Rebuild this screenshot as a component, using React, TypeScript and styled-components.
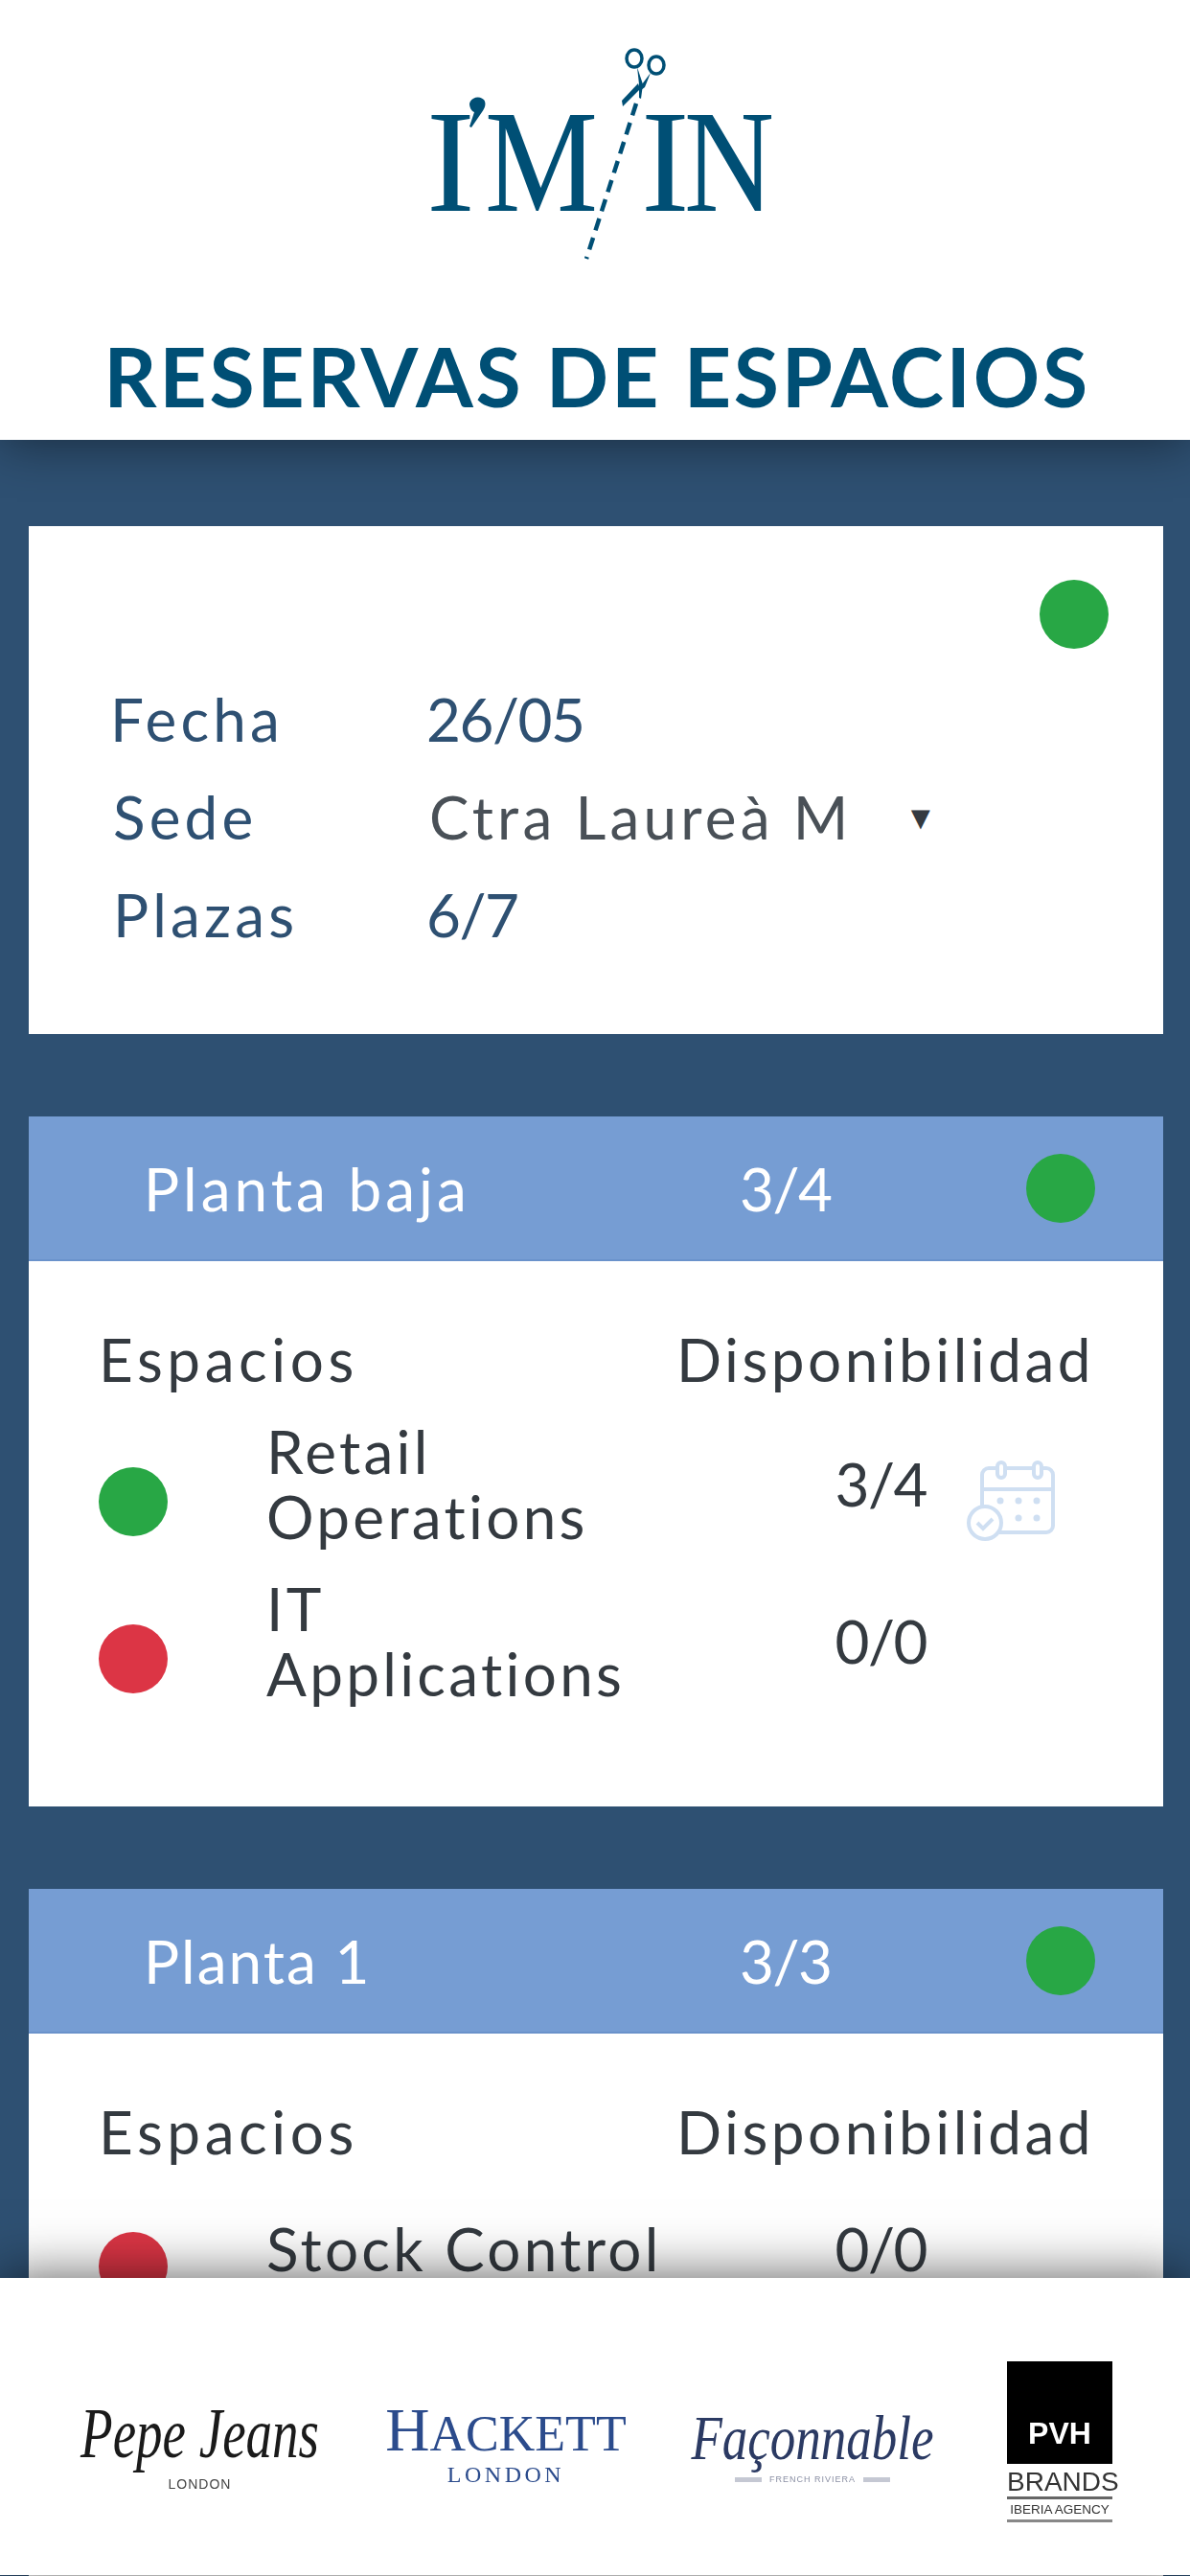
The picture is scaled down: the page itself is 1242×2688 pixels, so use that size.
import styled, { createGlobalStyle } from 'styled-components';

const GlobalStyle = createGlobalStyle`
  html, body {
    margin: 0;
    padding: 0;
    background: #2e5072;
  }
  * {
    box-sizing: border-box;
  }
`;

const Page = styled.div`
  position: relative;
  width: 1242px;
  height: 2688px;
  overflow: hidden;
  background: #2e5072;
  font-family: Lato, 'Open Sans', sans-serif;
`;

const TopBar = styled.header`
  position: relative;
  z-index: 2;
  height: 459px;
  display: flex;
  flex-direction: column;
  align-items: center;
  background: #fff;
  box-shadow: 0 4px 50px rgba(0, 0, 0, 0.45);
`;

const LogoSvg = styled.svg`
  display: block;
  margin-top: 30px;
  flex: none;
`;

const Title = styled.h1`
  margin: 62px 0 0 4px;
  font-size: 86px;
  line-height: 100px;
  font-weight: 700;
  letter-spacing: 2.7px;
  color: #004f75;
  white-space: nowrap;
`;

const Content = styled.main`
  display: flex;
  flex-direction: column;
  gap: 86px;
  padding: 90px 28px 0 30px;
`;

const Card = styled.section`
  background: #fff;
`;

const SummaryCard = styled(Card)`
  height: 530px;
  padding: 56px 57px 0 85px;
  display: flex;
  flex-direction: column;
`;

const SummaryDot = styled.div`
  align-self: flex-end;
  margin-bottom: 22px;
`;

const SummaryRow = styled.div`
  display: grid;
  grid-template-columns: 330px 1fr;
  align-items: center;
  height: 102px;
  font-size: 62px;
  letter-spacing: 4.2px;
  color: #2e5072;
`;

const SummaryLabel = styled.span<{ $inset?: boolean }>`
  padding-left: ${(p) => (p.$inset ? 3 : 0)}px;
`;

const Num = styled.span`
  letter-spacing: -1.5px;
`;

const SelectBox = styled.div`
  display: flex;
  align-items: center;
  padding-left: 3px;
  color: #495057;
`;

const SelectText = styled.span`
  width: 438px;
  white-space: nowrap;
`;

const SelectArrow = styled.span`
  margin-left: 58px;
  font-size: 34px;
  letter-spacing: 0;
  color: #343a40;
`;

const Dot = styled.span<{ $color: 'green' | 'red' }>`
  display: block;
  width: 72px;
  height: 72px;
  border-radius: 50%;
  background: ${(p) => (p.$color === 'green' ? '#28a745' : '#dc3545')};
`;

const FloorHeader = styled.div`
  display: grid;
  grid-template-columns: 622px 299px 72px;
  align-items: center;
  height: 151px;
  padding-left: 120px;
  background: #769dd3;
  border-bottom: 2px solid #6a92cb;
  font-size: 62px;
  color: #fff;
`;

const FloorName = styled.span<{ $spacing: number }>`
  letter-spacing: ${(p) => p.$spacing}px;
`;

const FloorBody = styled.div<{ $gap: number; $pad: number }>`
  display: flex;
  flex-direction: column;
  gap: ${(p) => p.$gap}px;
  padding: 68px 0 ${(p) => p.$pad}px 73px;
`;

const SpacesHead = styled.div`
  display: flex;
  justify-content: space-between;
  height: 68px;
  line-height: 68px;
  padding-right: 72px;
  font-size: 62px;
  letter-spacing: 4.6px;
  color: #343a40;
`;

const AvailabilityLabel = styled.span`
  letter-spacing: 3.5px;
`;

const SpaceRow = styled.div<{ $offset?: number }>`
  display: grid;
  grid-template-columns: 175px 440px 249px 135px;
  align-items: center;
  margin-top: ${(p) => p.$offset ?? 0}px;
  font-size: 62px;
  line-height: 68px;
  letter-spacing: 3.3px;
  color: #343a40;
`;

const RowDot = styled.div`
  margin-top: 38px;
`;

const SpaceName = styled.div`
  white-space: pre-line;
`;

const SpaceCount = styled.div`
  text-align: right;
  letter-spacing: -1.5px;
`;

const CalendarSvg = styled.svg`
  display: block;
  margin: 38px 0 0 42px;
`;

const BottomBar = styled.footer`
  position: absolute;
  z-index: 3;
  left: 0;
  right: 0;
  top: 2377px;
  height: 310px;
  display: flex;
  align-items: center;
  padding: 40px 0 0 86px;
  background: #fff;
  box-shadow: 0 0 55px rgba(0, 0, 0, 0.65);
`;

const BrandLogo = styled.div`
  display: flex;
  flex-direction: column;
  align-items: center;
  font-family: 'Liberation Serif', serif;
  filter: blur(0.6px);
`;

const PepeLogo = styled(BrandLogo)`
  width: 245px;
  color: #1a1a1a;
`;

const PepeName = styled.span`
  font-size: 55px;
  line-height: 74px;
  font-style: italic;
  white-space: nowrap;
  transform: scaleY(1.35);
`;

const TinyCaps = styled.span`
  margin-top: 6px;
  font-family: 'Liberation Sans', sans-serif;
  font-size: 14px;
  line-height: 18px;
  letter-spacing: 1px;
  color: #444;
`;

const HackettLogo = styled(BrandLogo)`
  width: 252px;
  margin-left: 71px;
  color: #2b4b8c;
`;

const HackettName = styled.span`
  font-size: 52px;
  line-height: 50px;
  white-space: nowrap;

  &::first-letter {
    font-size: 64px;
  }
`;

const HackettCity = styled.span`
  margin-top: 6px;
  font-size: 24px;
  line-height: 22px;
  letter-spacing: 3.5px;
`;

const FaconLogo = styled(BrandLogo)`
  width: 246px;
  margin-left: 71px;
  color: #2b3a63;
`;

const FaconName = styled.span`
  font-size: 53px;
  line-height: 62px;
  font-style: italic;
  white-space: nowrap;
  transform: scaleY(1.25);
`;

const FaconTag = styled.div`
  display: flex;
  align-items: center;
  gap: 8px;
  margin-top: 8px;
  font-family: 'Liberation Sans', sans-serif;
  font-size: 9px;
  line-height: 10px;
  letter-spacing: 1px;
  color: #8a8fa3;
  white-space: nowrap;

  &::before,
  &::after {
    content: '';
    width: 28px;
    height: 5px;
    background: #c5c8d3;
  }
`;

const PvhLogo = styled(BrandLogo)`
  width: 110px;
  margin: -8px 0 0 80px;
  align-items: stretch;
  font-family: 'Liberation Sans', sans-serif;
`;

const PvhBox = styled.div`
  height: 107px;
  display: flex;
  align-items: center;
  justify-content: center;
  padding-top: 43px;
  background: #000;
  color: #fff;
  font-size: 32px;
  font-weight: 700;
`;

const PvhBrands = styled.div`
  margin-top: 4px;
  text-align: center;
  font-size: 28px;
  line-height: 30px;
  color: #333;
  border-bottom: 3px solid #666;
`;

const PvhAgency = styled.div`
  padding: 3px 0 2px;
  text-align: center;
  font-size: 13.5px;
  line-height: 16px;
  color: #333;
  white-space: nowrap;
  border-bottom: 3px solid #888;
`;

const Logo = () => (
  <LogoSvg width="400" height="250" viewBox="420 30 400 250">
    <g fill="#004f75" fontFamily="'Liberation Serif', serif" fontSize="152">
      <text x="444" y="220">I</text>
      <text x="505" y="220" textLength="118" lengthAdjust="spacingAndGlyphs">M</text>
      <text x="668" y="220">I</text>
      <text x="713" y="220" textLength="94" lengthAdjust="spacingAndGlyphs">N</text>
    </g>
    <path d="M489 108a9 9 0 0 1 15-4c3 4 1 9-2 13l-11 16-2-1 5-15c-3-1-5-5-5-9z" fill="#004f75" />
    <line x1="663" y1="108" x2="611" y2="270" stroke="#004f75" strokeWidth="4.5" strokeDasharray="13 8" />
    <ellipse cx="661" cy="61" rx="8" ry="9" fill="none" stroke="#004f75" strokeWidth="3.5" />
    <ellipse cx="684" cy="68" rx="8" ry="9" fill="none" stroke="#004f75" strokeWidth="3.5" />
    <path d="M664 70l6 18-2 15-2-1 0-14z" fill="#004f75" />
    <path d="M678 76l-9 12-1 6 4-3z" fill="#004f75" />
    <path d="M665 87l2 6-18 18-1-6z" fill="#004f75" />
  </LogoSvg>
);

const CalendarIcon = () => (
  <CalendarSvg width="92" height="86" viewBox="0 0 92 86" fill="none" stroke="#cfdff2" strokeWidth="4">
    <path d="M34 75h49a7 7 0 0 0 7-7V15a7 7 0 0 0-7-7H23a7 7 0 0 0-7 7v32" />
    <path d="M16 30h74" />
    <rect x="32" y="2" width="8" height="16" rx="4" fill="#fff" />
    <rect x="70" y="2" width="8" height="16" rx="4" fill="#fff" />
    <circle cx="19" cy="65" r="17" fill="#fff" />
    <path d="M11 65l6 6 10-10" />
    <g fill="#cfdff2" stroke="none">
      <circle cx="35" cy="42" r="3.5" />
      <circle cx="54" cy="42" r="3.5" />
      <circle cx="73" cy="42" r="3.5" />
      <circle cx="54" cy="60" r="3.5" />
      <circle cx="73" cy="60" r="3.5" />
    </g>
  </CalendarSvg>
);

export default function App() {
  return (
    <Page>
      <GlobalStyle />
      <TopBar>
        <Logo />
        <Title>RESERVAS DE ESPACIOS</Title>
      </TopBar>
      <Content>
        <SummaryCard>
          <SummaryDot>
            <Dot $color="green" />
          </SummaryDot>
          <SummaryRow>
            <SummaryLabel>Fecha</SummaryLabel>
            <Num>26/05</Num>
          </SummaryRow>
          <SummaryRow>
            <SummaryLabel $inset>Sede</SummaryLabel>
            <SelectBox>
              <SelectText>Ctra Laureà M</SelectText>
              <SelectArrow>▼</SelectArrow>
            </SelectBox>
          </SummaryRow>
          <SummaryRow>
            <SummaryLabel $inset>Plazas</SummaryLabel>
            <Num>6/7</Num>
          </SummaryRow>
        </SummaryCard>
        <Card>
          <FloorHeader>
            <FloorName $spacing={4}>Planta baja</FloorName>
            <Num>3/4</Num>
            <Dot $color="green" />
          </FloorHeader>
          <FloorBody $gap={28} $pad={105}>
            <SpacesHead>
              <span>Espacios</span>
              <AvailabilityLabel>Disponibilidad</AvailabilityLabel>
            </SpacesHead>
            <SpaceRow>
              <RowDot>
                <Dot $color="green" />
              </RowDot>
              <SpaceName>{'Retail\nOperations'}</SpaceName>
              <SpaceCount>3/4</SpaceCount>
              <CalendarIcon />
            </SpaceRow>
            <SpaceRow>
              <RowDot>
                <Dot $color="red" />
              </RowDot>
              <SpaceName>{'IT\nApplications'}</SpaceName>
              <SpaceCount>0/0</SpaceCount>
            </SpaceRow>
          </FloorBody>
        </Card>
        <Card>
          <FloorHeader>
            <FloorName $spacing={2}>Planta 1</FloorName>
            <Num>3/3</Num>
            <Dot $color="green" />
          </FloorHeader>
          <FloorBody $gap={33} $pad={200}>
            <SpacesHead>
              <span>Espacios</span>
              <AvailabilityLabel>Disponibilidad</AvailabilityLabel>
            </SpacesHead>
            <SpaceRow>
              <RowDot>
                <Dot $color="red" />
              </RowDot>
              <SpaceName>Stock Control</SpaceName>
              <SpaceCount>0/0</SpaceCount>
            </SpaceRow>
            {/* la fila siguiente queda tapada por el pie, solo asoma el punto */}
            <SpaceRow $offset={234}>
              <RowDot>
                <Dot $color="green" />
              </RowDot>
            </SpaceRow>
          </FloorBody>
        </Card>
      </Content>
      <BottomBar>
        <PepeLogo>
          <PepeName>Pepe Jeans</PepeName>
          <TinyCaps>LONDON</TinyCaps>
        </PepeLogo>
        <HackettLogo>
          <HackettName>HACKETT</HackettName>
          <HackettCity>LONDON</HackettCity>
        </HackettLogo>
        <FaconLogo>
          <FaconName>Façonnable</FaconName>
          <FaconTag>FRENCH RIVIERA</FaconTag>
        </FaconLogo>
        <PvhLogo>
          <PvhBox>PVH</PvhBox>
          <PvhBrands>BRANDS</PvhBrands>
          <PvhAgency>IBERIA AGENCY</PvhAgency>
        </PvhLogo>
      </BottomBar>
    </Page>
  );
}
